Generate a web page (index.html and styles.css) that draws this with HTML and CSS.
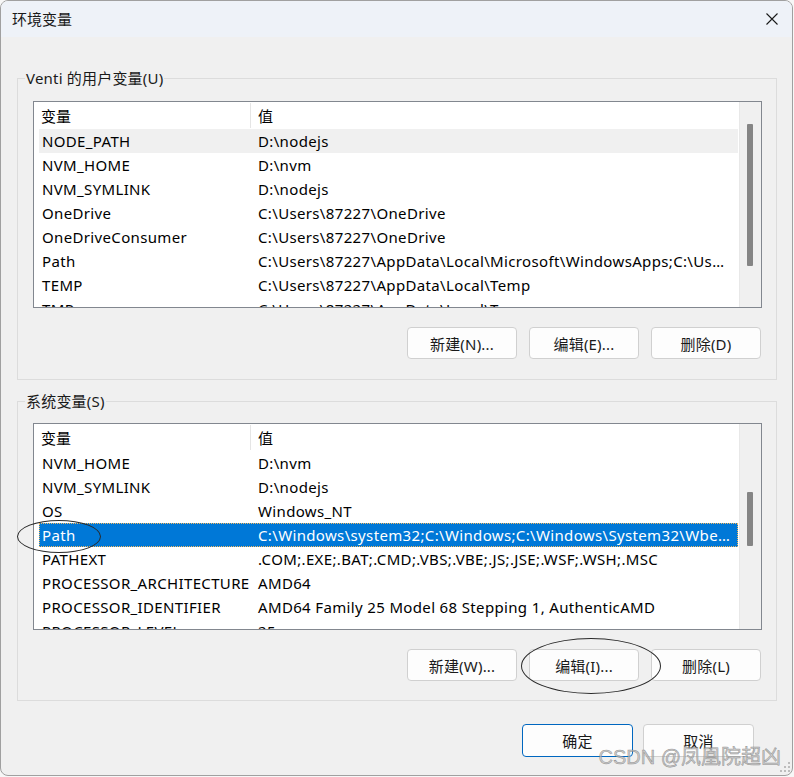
FILE: index.html
```html
<!DOCTYPE html>
<html lang="zh-CN">
<head>
    <meta charset="UTF-8">
    <title>环境变量</title>
    <link rel="stylesheet" href="styles.css">
</head>
<body>
    <div class="window">
        <div class="titlebar">
            <span class="title">环境变量</span>
            <svg class="close" width="12" height="12" viewBox="0 0 12 12">
                <path d="M0.5 0.5 L11.5 11.5 M11.5 0.5 L0.5 11.5" stroke="#1a1a1a" stroke-width="1.1" fill="none"/>
            </svg>
        </div>

        <div class="main">
            <div class="group group-user">
                <span class="legend">Venti 的用户变量(U)</span>
                <div class="list">
                    <div class="list-body">
                        <div class="list-head">
                            <div class="cell name">变量</div>
                            <div class="cell value">值</div>
                        </div>
                        <div class="row hover"><div class="cell name">NODE_PATH</div><div class="cell value">D:\nodejs</div></div>
                        <div class="row"><div class="cell name">NVM_HOME</div><div class="cell value">D:\nvm</div></div>
                        <div class="row"><div class="cell name">NVM_SYMLINK</div><div class="cell value">D:\nodejs</div></div>
                        <div class="row"><div class="cell name">OneDrive</div><div class="cell value">C:\Users\87227\OneDrive</div></div>
                        <div class="row"><div class="cell name">OneDriveConsumer</div><div class="cell value">C:\Users\87227\OneDrive</div></div>
                        <div class="row"><div class="cell name">Path</div><div class="cell value">C:\Users\87227\AppData\Local\Microsoft\WindowsApps;C:\Users\87227\AppData\Roaming\npm</div></div>
                        <div class="row"><div class="cell name">TEMP</div><div class="cell value">C:\Users\87227\AppData\Local\Temp</div></div>
                        <div class="row"><div class="cell name">TMP</div><div class="cell value">C:\Users\87227\AppData\Local\Temp</div></div>
                    </div>
                    <div class="scrollbar"><div class="thumb thumb-user"></div></div>
                </div>
                <div class="btn-row">
                    <button class="btn">新建(N)...</button>
                    <button class="btn">编辑(E)...</button>
                    <button class="btn">删除(D)</button>
                </div>
            </div>

            <div class="group group-system">
                <span class="legend">系统变量(S)</span>
                <div class="list">
                    <div class="list-body">
                        <div class="list-head">
                            <div class="cell name">变量</div>
                            <div class="cell value">值</div>
                        </div>
                        <div class="row"><div class="cell name">NVM_HOME</div><div class="cell value">D:\nvm</div></div>
                        <div class="row"><div class="cell name">NVM_SYMLINK</div><div class="cell value">D:\nodejs</div></div>
                        <div class="row"><div class="cell name">OS</div><div class="cell value">Windows_NT</div></div>
                        <div class="row selected"><div class="cell name">Path</div><div class="cell value">C:\Windows\system32;C:\Windows;C:\Windows\System32\Wbem;C:\Windows\System32\WindowsPowerShell\v1.0\</div></div>
                        <div class="row"><div class="cell name">PATHEXT</div><div class="cell value">.COM;.EXE;.BAT;.CMD;.VBS;.VBE;.JS;.JSE;.WSF;.WSH;.MSC</div></div>
                        <div class="row"><div class="cell name">PROCESSOR_ARCHITECTURE</div><div class="cell value">AMD64</div></div>
                        <div class="row"><div class="cell name">PROCESSOR_IDENTIFIER</div><div class="cell value">AMD64 Family 25 Model 68 Stepping 1, AuthenticAMD</div></div>
                        <div class="row"><div class="cell name">PROCESSOR_LEVEL</div><div class="cell value">25</div></div>
                    </div>
                    <div class="scrollbar"><div class="thumb thumb-system"></div></div>
                </div>
                <div class="btn-row">
                    <button class="btn">新建(W)...</button>
                    <button class="btn">编辑(I)...</button>
                    <button class="btn">删除(L)</button>
                </div>
            </div>

            <div class="footer">
                <button class="btn btn-wide btn-default">确定</button>
                <button class="btn btn-wide">取消</button>
            </div>
        </div>

        <!-- hand drawn marks on the screenshot -->
        <span class="mark mark-path"></span>
        <span class="mark mark-edit"></span>

        <span class="watermark">CSDN @凤凰院超凶</span>
        <svg class="grip" width="12" height="12" viewBox="0 0 12 12">
            <rect x="8" y="0" width="2" height="2" fill="#bdbdbd"/>
            <rect x="4" y="4" width="2" height="2" fill="#bdbdbd"/>
            <rect x="8" y="4" width="2" height="2" fill="#bdbdbd"/>
            <rect x="0" y="8" width="2" height="2" fill="#bdbdbd"/>
            <rect x="4" y="8" width="2" height="2" fill="#bdbdbd"/>
            <rect x="8" y="8" width="2" height="2" fill="#bdbdbd"/>
        </svg>
    </div>
</body>
</html>
```

FILE: styles.css
```css
body {
    margin: 0;
    background: #f7f7f7;
    font-family: "Noto Sans", "Noto Sans CJK SC", sans-serif;
    font-size: 15px;
    color: #000;
}
.window {
    position: relative;
    box-sizing: border-box;
    width: 793px;
    height: 776px;
    border: 1px solid #a0a0a0;
    border-radius: 8px;
    background: #f0f0f0;
    overflow: hidden;
}
.titlebar {
    height: 36px;
    background: #eef2f8;
    display: flex;
    align-items: center;
    justify-content: space-between;
    padding: 0 14px 0 11px;
}
.title {
    font-family: "Noto Sans CJK SC", sans-serif;
    font-size: 15px;
    line-height: 34px;
    color: #1a1a1a;
}
.main {
    padding: 0 15px 0 16px;
}
.group {
    position: relative;
    border: 1px solid #dcdcdc;
    padding: 22px 14px 0 15px;
}
.group-user {
    margin-top: 41px;
    padding-bottom: 20px;
}
.group-system {
    margin-top: 21px;
    padding-top: 21px;
    padding-bottom: 19px;
}
.legend {
    position: absolute;
    top: -11px;
    left: 7px;
    padding: 0 1px;
    line-height: 20px;
    letter-spacing: 0.2px;
    background: #f0f0f0;
    color: #1a1a1a;
}
.list {
    display: flex;
    height: 207px;
    box-sizing: border-box;
    border: 1px solid #82878f;
    background: #fff;
}
.list-body {
    flex: 1;
    overflow: hidden;
}
.list-head {
    display: flex;
    height: 27px;
    align-items: center;
}
.list-head .cell {
    font-family: "Noto Sans CJK SC", sans-serif;
}
.list-head .name {
    box-sizing: border-box;
    width: 217px;
    height: 25px;
    line-height: 25px;
    padding-left: 7px;
    border-right: 1px solid #e5e5e5;
}
.list-head .value {
    padding-left: 7px;
}
.row {
    display: flex;
    height: 24px;
    line-height: 24px;
    margin: 0 1px 0 5px;
    box-sizing: border-box;
    letter-spacing: 0.35px;
}
.row .name {
    width: 212px;
    flex: none;
    padding-left: 3px;
    box-sizing: border-box;
    white-space: nowrap;
}
.row .value {
    flex: 1;
    min-width: 0;
    padding-left: 7px;
    padding-right: 8px;
    white-space: nowrap;
    overflow: hidden;
    text-overflow: ellipsis;
}
.row.hover {
    background: #f0f0f0;
}
.row.selected {
    background: #0078d7;
    color: #fff;
    outline: 1px dotted #f4b860;
    outline-offset: -1px;
}
.scrollbar {
    width: 22px;
    background: #f0f0f0;
    border-left: 1px solid #e8e8e8;
    box-sizing: border-box;
    padding-left: 7px;
}
.thumb {
    width: 6px;
    background: #858585;
    border-radius: 1px;
}
.thumb-user {
    margin-top: 22px;
    height: 142px;
}
.thumb-system {
    margin-top: 68px;
    height: 54px;
}
.btn-row {
    display: flex;
    justify-content: flex-end;
    gap: 12px;
    margin-top: 19px;
    margin-right: 1px;
}
.btn {
    width: 110px;
    height: 32px;
    border: 1px solid #d0d0d0;
    border-radius: 4px;
    background: #fdfdfd;
    font-family: "Noto Sans", "Noto Sans CJK SC", sans-serif;
    font-size: 15px;
    letter-spacing: 0.2px;
    color: #1a1a1a;
    padding: 0;
}
.footer {
    display: flex;
    justify-content: flex-end;
    gap: 10px;
    margin-top: 23px;
    margin-right: 23px;
}
.btn-wide {
    width: 111px;
    height: 33px;
}
.btn-default {
    border-color: #0067c0;
}
.mark {
    position: absolute;
    border: 1px solid #2a2a2a;
    border-radius: 50%;
}
.mark-path {
    left: 16px;
    top: 519px;
    width: 82px;
    height: 31px;
}
.mark-edit {
    left: 520px;
    top: 637px;
    width: 138px;
    height: 54px;
}
.watermark {
    position: absolute;
    right: 11px;
    top: 743px;
    font-family: "Liberation Sans", "Noto Sans CJK SC", sans-serif;
    font-size: 20px;
    line-height: 26px;
    color: rgba(190, 190, 190, 0.75);
    -webkit-text-stroke: 0.5px rgba(110, 110, 110, 0.7);
}
.grip {
    position: absolute;
    left: 779px;
    top: 761px;
}
```
